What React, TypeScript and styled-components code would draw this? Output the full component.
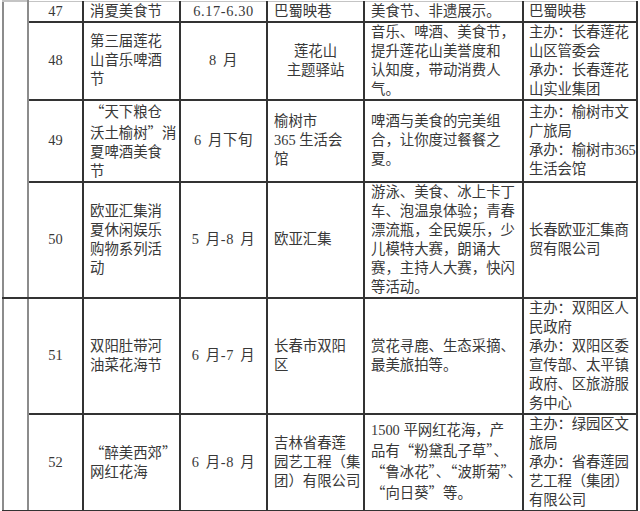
import React from 'react';
import styled, { createGlobalStyle } from 'styled-components';

const GlobalStyle = createGlobalStyle`
    html, body {
        margin: 0;
        padding: 0;
        background: #fff;
    }
    body {
        font-family: "Liberation Serif", "Noto Sans CJK SC", serif;
        color: #383838;
    }
`;

const Page = styled.div`
    width: 640px;
    height: 511px;
    overflow: hidden;
    padding-left: 2px;
    box-sizing: border-box;
`;

const Sheet = styled.table`
    border-collapse: collapse;
    table-layout: fixed;
    width: 634px;
    font-size: 14.4px;
    line-height: 19px;
`;

const Col = styled.col<{ $w: number }>`
    width: ${p => p.$w}px;
`;

const Row = styled.tr<{ $h: number }>`
    height: ${p => p.$h}px;
`;

const Margin = styled.td`
    border: 2px solid #8c8c8c;
    border-top-color: #c4c4c4;
    border-bottom-color: #333;
    padding: 0;
`;

type Align = 'left' | 'center';

const Cell = styled.td<{ $align: Align; $top?: boolean }>`
    border: 2px solid #333;
    border-top: ${p => (p.$top ? '1px solid #c4c4c4' : '2px solid #333')};
    padding: 0 0 0 ${p => (p.$align === 'left' ? '6px' : '0')};
    text-align: ${p => p.$align};
    vertical-align: middle;
    white-space: nowrap;
    overflow: hidden;
`;

const DateText = styled.span`
    letter-spacing: 0.6px;
    word-spacing: 2px;
`;

const OrgCell = styled(Cell)`
    padding-left: 5px;
    letter-spacing: -0.15px;
`;

const Line = styled.div`
    display: block;
`;

const Cjk = styled.span`
    font-family: "Noto Sans CJK SC", sans-serif;
`;

type Entry = {
    num: string,
    height: number,
    name: string[],
    date: string,
    venue: string[],
    venueAlign?: Align,
    content: string[],
    org: string[],
};

const widths = [25, 55, 97, 87, 97, 159, 114];

const rows: Entry[] = [
    {
        num: '47', height: 20,
        name: ['消夏美食节'],
        date: '6.17-6.30',
        venue: ['巴蜀映巷'],
        content: ['美食节、非遗展示。'],
        org: ['巴蜀映巷'],
    },
    {
        num: '48', height: 78,
        name: ['第三届莲花', '山音乐啤酒', '节'],
        date: '8 月',
        venue: ['莲花山', '主题驿站'],
        venueAlign: 'center',
        content: ['音乐、啤酒、美食节，', '提升莲花山美誉度和', '认知度，带动消费人', '气。'],
        org: ['主办：长春莲花', '山区管委会', '承办：长春莲花', '山实业集团'],
    },
    {
        num: '49', height: 78,
        name: ['“天下粮仓', '沃土榆树”消', '夏啤酒美食', '节'],
        date: '6 月下旬',
        venue: ['榆树市', '365 生活会', '馆'],
        content: ['啤酒与美食的完美组', '合，让你度过餐餐之', '夏。'],
        org: ['主办：榆树市文', '广旅局', '承办：榆树市365', '生活会馆'],
    },
    {
        num: '50', height: 115,
        name: ['欧亚汇集消', '夏休闲娱乐', '购物系列活', '动'],
        date: '5 月-8 月',
        venue: ['欧亚汇集'],
        content: ['游泳、美食、冰上卡丁', '车、泡温泉体验；青春', '漂流瓶，全民娱乐，少', '儿模特大赛，朗诵大', '赛，主持人大赛，快闪', '等活动。'],
        org: ['长春欧亚汇集商', '贸有限公司'],
    },
    {
        num: '51', height: 116,
        name: ['双阳肚带河', '油菜花海节'],
        date: '6 月-7 月',
        venue: ['长春市双阳', '区'],
        content: ['赏花寻鹿、生态采摘、', '最美旅拍等。'],
        org: ['主办：双阳区人', '民政府', '承办：双阳区委', '宣传部、太平镇', '政府、区旅游服', '务中心'],
    },
    {
        num: '52', height: 96,
        name: ['“醉美西郊”', '网红花海'],
        date: '6 月-8 月',
        venue: ['吉林省春莲', '园艺工程（集', '团）有限公司'],
        content: ['1500 平网红花海，产', '品有“粉黛乱子草”、', '“鲁冰花”、“波斯菊”、', '“向日葵”等。'],
        org: ['主办：绿园区文', '旅局', '承办：省春莲园', '艺工程（集团）', '有限公司'],
    },
];

// full-width quotes come from the CJK face, everything else from the serif
const renderText = (text: string) => text.split(/([“”])/).map((part, i) => (
    part === '“' || part === '”' ? <Cjk key={i}>{part}</Cjk> : part
));

const Lines = ({ lines }: { lines: string[] }) => <>
    {lines.map((l, i) => <Line key={i}>{renderText(l)}</Line>)}
</>;

export default function App() {
    return <>
        <GlobalStyle />
        <Page>
            <Sheet>
                <colgroup>
                    {widths.map((w, i) => <Col key={i} $w={w} />)}
                </colgroup>
                <tbody>
                    {rows.map((r, i) => {
                        const top = i === 0;
                        return <Row key={r.num} $h={r.height}>
                            {i === 0 && <Margin rowSpan={4} />}
                            {i === 4 && <Margin rowSpan={2} />}
                            <Cell $align="center" $top={top}>{r.num}</Cell>
                            <Cell $align="left" $top={top}><Lines lines={r.name} /></Cell>
                            <Cell $align="center" $top={top}><DateText>{r.date}</DateText></Cell>
                            <Cell $align={r.venueAlign ?? 'left'} $top={top}><Lines lines={r.venue} /></Cell>
                            <Cell $align="left" $top={top}><Lines lines={r.content} /></Cell>
                            <OrgCell $align="left" $top={top}><Lines lines={r.org} /></OrgCell>
                        </Row>;
                    })}
                </tbody>
            </Sheet>
        </Page>
    </>;
}
